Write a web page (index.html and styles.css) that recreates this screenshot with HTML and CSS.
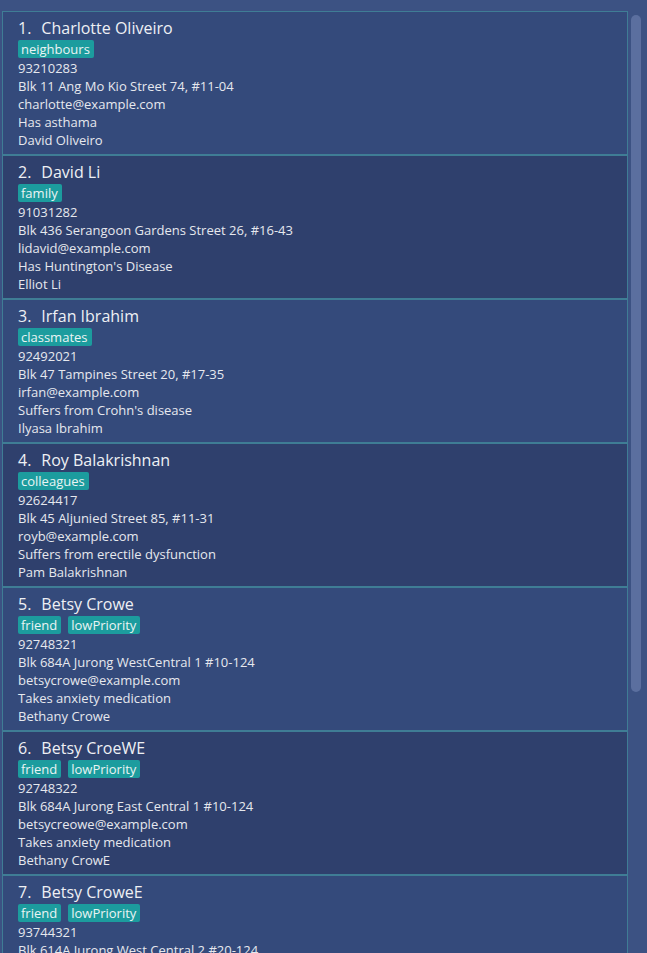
FILE: index.html
```html
<!DOCTYPE html>
<html>
<head>
<meta charset="utf-8">
<link rel="stylesheet" href="styles.css">
</head>
<body>
<div class="app">
  <div class="list">
    <div class="card odd">
      <div class="name"><span class="idx">1.</span><span>Charlotte Oliveiro</span></div>
      <div class="tags"><span class="tag">neighbours</span></div>
      <div class="line">93210283</div>
      <div class="line">Blk 11 Ang Mo Kio Street 74, #11-04</div>
      <div class="line">charlotte@example.com</div>
      <div class="line">Has asthama</div>
      <div class="line">David Oliveiro</div>
    </div>
    <div class="card even">
      <div class="name"><span class="idx">2.</span><span>David Li</span></div>
      <div class="tags"><span class="tag">family</span></div>
      <div class="line">91031282</div>
      <div class="line">Blk 436 Serangoon Gardens Street 26, #16-43</div>
      <div class="line">lidavid@example.com</div>
      <div class="line">Has Huntington's Disease</div>
      <div class="line">Elliot Li</div>
    </div>
    <div class="card odd">
      <div class="name"><span class="idx">3.</span><span>Irfan Ibrahim</span></div>
      <div class="tags"><span class="tag">classmates</span></div>
      <div class="line">92492021</div>
      <div class="line">Blk 47 Tampines Street 20, #17-35</div>
      <div class="line">irfan@example.com</div>
      <div class="line">Suffers from Crohn's disease</div>
      <div class="line">Ilyasa Ibrahim</div>
    </div>
    <div class="card even">
      <div class="name"><span class="idx">4.</span><span>Roy Balakrishnan</span></div>
      <div class="tags"><span class="tag">colleagues</span></div>
      <div class="line">92624417</div>
      <div class="line">Blk 45 Aljunied Street 85, #11-31</div>
      <div class="line">royb@example.com</div>
      <div class="line">Suffers from erectile dysfunction</div>
      <div class="line">Pam Balakrishnan</div>
    </div>
    <div class="card odd">
      <div class="name"><span class="idx">5.</span><span>Betsy Crowe</span></div>
      <div class="tags"><span class="tag">friend</span><span class="tag">lowPriority</span></div>
      <div class="line">92748321</div>
      <div class="line">Blk 684A Jurong WestCentral 1 #10-124</div>
      <div class="line">betsycrowe@example.com</div>
      <div class="line">Takes anxiety medication</div>
      <div class="line">Bethany Crowe</div>
    </div>
    <div class="card even">
      <div class="name"><span class="idx">6.</span><span>Betsy CroeWE</span></div>
      <div class="tags"><span class="tag">friend</span><span class="tag">lowPriority</span></div>
      <div class="line">92748322</div>
      <div class="line">Blk 684A Jurong East Central 1 #10-124</div>
      <div class="line">betsycreowe@example.com</div>
      <div class="line">Takes anxiety medication</div>
      <div class="line">Bethany CrowE</div>
    </div>
    <div class="card odd">
      <div class="name"><span class="idx">7.</span><span>Betsy CroweE</span></div>
      <div class="tags"><span class="tag">friend</span><span class="tag">lowPriority</span></div>
      <div class="line">93744321</div>
      <div class="line">Blk 614A Jurong West Central 2 #20-124</div>
      <div class="line">betsycrowe@example.com</div>
      <div class="line">Takes anxiety medication</div>
      <div class="line">Bethany Crowe</div>
    </div>
  </div>
  <div class="scrollbar"><div class="thumb"></div></div>
</div>
</body>
</html>
```
FILE: styles.css
```css
html, body {
  margin: 0;
  padding: 0;
  height: 100%;
  overflow: hidden;
  background: #3c5283;
  font-family: "Open Sans", "Noto Sans", sans-serif;
}
.app {
  display: flex;
  height: 953px;
  padding: 11px 0 0 2px;
  box-sizing: border-box;
}
.list {
  width: 626px;
  border-left: 1px solid #3f7d95;
  border-top: 1px solid #3f7d95;
  border-right: 1px solid #3f7d95;
  box-sizing: border-box;
  overflow: hidden;
  display: flex;
  flex-direction: column;
}
.card {
  flex: none;
  height: 144px;
  box-sizing: border-box;
  padding: 5px 0 0 15px;
  border-bottom: 2px solid #3f7d95;
  color: #e6e8ee;
}
.odd { background: #344a7b; }
.even { background: #2f406d; }
.name {
  display: flex;
  gap: 10px;
  font-size: 16px;
  line-height: 22px;
  color: #eef0f4;
}
.tags {
  display: flex;
  gap: 7px;
  margin: 1px 0 1px 0;
}
.tag {
  background: #1c9c9e;
  color: #eaf4f4;
  font-size: 13px;
  line-height: 18px;
  padding: 0 4px 0 3px;
  border-radius: 2px;
}
.line {
  font-size: 13px;
  line-height: 18px;
}
.scrollbar {
  flex: 1;
  padding: 4px 0 0 3px;
}
.thumb {
  width: 10px;
  height: 677px;
  background: #5b6f9f;
  border-radius: 5px;
}
```
